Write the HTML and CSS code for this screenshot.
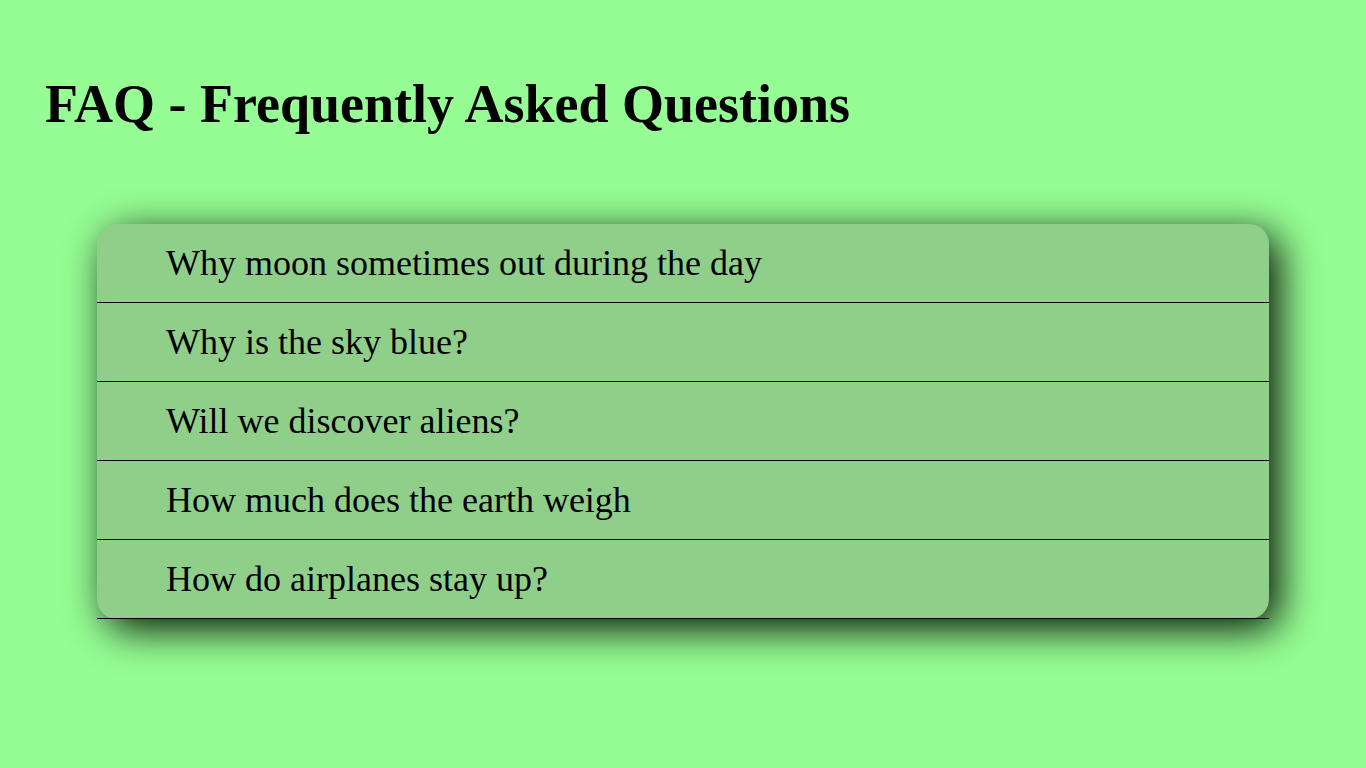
FILE: index.html
```html
<!DOCTYPE html>
<html lang="en">
<head>
<meta charset="utf-8">
<title>FAQ</title>
<link rel="stylesheet" href="styles.css">
</head>
<body>
<h1 class="title">FAQ - Frequently Asked Questions</h1>
<div class="faq">
  <div class="item">Why moon sometimes out during the day</div>
  <div class="item">Why is the sky blue?</div>
  <div class="item">Will we discover aliens?</div>
  <div class="item">How much does the earth weigh</div>
  <div class="item">How do airplanes stay up?</div>
</div>
</body>
</html>
```
FILE: styles.css
```css
html, body {
  margin: 0;
  padding: 0;
}
body {
  background: #95fd93;
  font-family: "Liberation Serif", "Times New Roman", serif;
  color: #000;
  min-height: 768px;
}
.title {
  margin: 0;
  padding: 74px 0 0 45px;
  font-size: 54px;
  font-weight: bold;
  line-height: 60px;
}
.faq {
  margin: 90px 97px 0 97px;
  background: #8fcf8a;
  border-radius: 20px;
  box-shadow: 10px 10px 40px rgba(0, 0, 0, 0.95);
}
.item {
  height: 78px;
  border-bottom: 1px solid #000;
  padding-left: 69px;
  font-size: 36px;
  line-height: 78px;
}
```
